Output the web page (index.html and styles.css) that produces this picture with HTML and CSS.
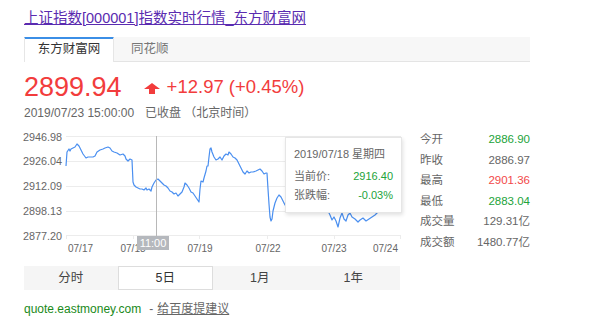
FILE: index.html
```html
<!DOCTYPE html>
<html lang="zh">
<head>
<meta charset="utf-8">
<title>上证指数</title>
<link rel="stylesheet" href="styles.css">
</head>
<body>
<div class="page">
  <a class="title" href="#">上证指数[000001]指数实时行情_东方财富网</a>
  <div class="tabs">
    <div class="tab active">东方财富网</div>
    <div class="tab">同花顺</div>
  </div>
  <div class="quote">
    <span class="price">2899.94</span>
    <svg class="arrow" width="16" height="11" viewBox="0 0 16 11"><path d="M8 0 L16 6 L11 6 L11 11 L5 11 L5 6 L0 6 Z" fill="#f23c3c"/></svg>
    <span class="change">+12.97 (+0.45%)</span>
  </div>
  <div class="time"><span>2019/07/23 15:00:00</span><span class="closed">已收盘</span><span class="zone">（北京时间）</span></div>
  <div class="main">
    <div class="chart">
      <svg width="380" height="130" viewBox="24 128 380 130">
        <g class="ylab" font-size="10.8" text-anchor="end" fill="#666">
          <text x="62" y="141.5">2946.98</text>
          <text x="62" y="166">2926.04</text>
          <text x="62" y="191">2912.09</text>
          <text x="62" y="216">2898.13</text>
          <text x="62" y="240.5">2877.20</text>
        </g>
        <g stroke="#ececec" stroke-width="1">
          <line x1="66" y1="137.5" x2="401" y2="137.5"/>
          <line x1="66" y1="162.5" x2="401" y2="162.5"/>
          <line x1="66" y1="187.5" x2="401" y2="187.5"/>
          <line x1="66" y1="212.5" x2="401" y2="212.5"/>
          <line x1="66" y1="236.5" x2="401" y2="236.5"/>
          <line x1="66.5" y1="236" x2="66.5" y2="240"/>
          <line x1="133.5" y1="236" x2="133.5" y2="240"/>
          <line x1="199.5" y1="236" x2="199.5" y2="240"/>
          <line x1="267.5" y1="236" x2="267.5" y2="240"/>
          <line x1="334.5" y1="236" x2="334.5" y2="240"/>
          <line x1="400.5" y1="236" x2="400.5" y2="240"/>
        </g>
        <g font-size="10" fill="#666">
          <text x="68" y="253">07/17</text>
          <text x="133" y="253" text-anchor="middle">07/18</text>
          <text x="200" y="253" text-anchor="middle">07/19</text>
          <text x="268" y="253" text-anchor="middle">07/22</text>
          <text x="334" y="253" text-anchor="middle">07/23</text>
          <text x="398" y="253" text-anchor="end">07/24</text>
        </g>
        <polyline fill="none" stroke="#4a8ff0" stroke-width="1.2" stroke-linejoin="round" points="66,167 67,153 69,150 70,152 71,150 73,149 75,148 77,145 79,147 81,151 83,155 86,159 88,158 90,158 93,158 95,157 97,153 100,151 103,150 105,149 108,148 110,149 112,152 114,153 117,154 120,156 123,155 125,157 126,160 128,162 130,160 132,161 133,183 134,186 136,188 138,189 140,190 142,190 144,191 146,189 147,191 149,190 151,192 152,188 154,184 156,181 158,180 160,182 162,184 164,186 166,187 168,189 170,192 172,193 174,195 176,194 178,197 180,195 182,193 184,188 185,184 187,186 189,189 191,193 193,194 195,197 197,200 199,203 200,190 201,182 203,183 204,179 206,172 207,167 208,167 209,158 210,150 211,149 212,153 214,158 216,161 218,160 220,158 222,161 224,157 226,155 228,156 229,153 231,155 233,158 235,159 237,161 239,165 241,169 243,173 245,175 247,172 249,174 251,173 253,173 256,172 258,171 260,170 262,172 264,175 266,174 267,174 268,190 269,205 270,218 271,222 272,220 273,212 275,204 277,199 279,196 281,198 283,202 285,206 288,200 292,205 296,210 300,207 305,210 310,205 315,208 320,206 325,210 328,212 330,216 332,221 334,218 336,222 338,228 340,219 342,214 344,220 346,222 348,216 350,214 352,218 355,220 358,223 360,221 363,219 366,222 369,220 372,218 375,216 378,213 381,212 383,211"/>
        <line x1="156.5" y1="137" x2="156.5" y2="237" stroke="#b8b8b8" stroke-width="1"/>
        <rect x="137" y="237" width="32" height="14" fill="#b5b8bd"/>
        <text x="153" y="248" font-size="11" fill="#fff" text-anchor="middle">11:00</text>
      </svg>
      <div class="tip">
        <div class="tip-date">2019/07/18 星期四</div>
        <div class="tip-row"><span>当前价:</span><span class="up-green">2916.40</span></div>
        <div class="tip-row"><span>张跌幅:</span><span class="up-green">-0.03%</span></div>
      </div>
    </div>
    <div class="stats">
      <div class="row"><span>今开</span><span class="green">2886.90</span></div>
      <div class="row"><span>昨收</span><span>2886.97</span></div>
      <div class="row"><span>最高</span><span class="red">2901.36</span></div>
      <div class="row"><span>最低</span><span class="green">2883.04</span></div>
      <div class="row"><span>成交量</span><span>129.31亿</span></div>
      <div class="row"><span>成交额</span><span>1480.77亿</span></div>
    </div>
  </div>
  <div class="periods">
    <div class="period">分时</div>
    <div class="period active">5日</div>
    <div class="period">1月</div>
    <div class="period">1年</div>
  </div>
  <div class="footer"><span class="site">quote.eastmoney.com</span><span class="dash">-</span><a class="advice" href="#">给百度提建议</a></div>
</div>
</body>
</html>
```
FILE: styles.css
```css
html, body {
  margin: 0;
  padding: 0;
  background: #fff;
}
body {
  font-family: "Liberation Sans", "Noto Sans CJK SC", sans-serif;
  color: #333;
}
.page {
  width: 506px;
  padding: 8px 0 0 24px;
}
.title {
  display: block;
  font-size: 14.5px;
  line-height: 20px;
  color: #5a2bb0;
  text-decoration: underline;
}
.tabs {
  margin-top: 9px;
  display: flex;
  height: 24px;
  background: #f7f7f7;
  border-bottom: 1px solid #e4e4e4;
}
.tab {
  font-size: 12.5px;
  line-height: 23px;
  color: #777;
  padding: 0 17px;
  border-top: 1px solid transparent;
}
.tab.active {
  width: 90px;
  box-sizing: border-box;
  padding: 0;
  text-align: center;
  color: #333;
  background: #fff;
  border-top: 1px solid #3b8ee6;
  border-left: 1px solid #e6e6e6;
  border-right: 1px solid #e6e6e6;
  height: 25px;
  box-shadow: inset 0 1px 0 #3b8ee6;
}
.quote {
  margin-top: 9px;
  display: flex;
  align-items: center;
  height: 32px;
  color: #f23c3c;
}
.price {
  font-size: 27px;
  line-height: 32px;
}
.arrow {
  margin-left: 22px;
  margin-top: 3px;
}
.change {
  margin-left: 7px;
  font-size: 18.5px;
  line-height: 32px;
}
.time {
  margin-top: 2px;
  font-size: 12px;
  line-height: 16px;
  color: #666;
}
.closed {
  margin-left: 11px;
}
.zone {
  margin-left: 3px;
}
.main {
  margin-top: 6px;
  display: flex;
}
.chart {
  position: relative;
  width: 380px;
  height: 130px;
}
.chart svg {
  display: block;
  overflow: visible;
  font-family: "Liberation Sans", sans-serif;
}
.tip {
  position: absolute;
  left: 261px;
  top: 10px;
  width: 117px;
  height: 76px;
  box-sizing: border-box;
  padding: 7px 8px 0 8px;
  background: #fff;
  border: 1px solid #e6e6e6;
  box-shadow: 1px 2px 4px rgba(0, 0, 0, 0.12);
  font-size: 11px;
  color: #666;
}
.tip-date {
  line-height: 18px;
}
.tip-row {
  display: flex;
  justify-content: space-between;
  line-height: 19px;
}
.tip-date + .tip-row {
  margin-top: 4px;
}
.up-green {
  color: #22a33a;
}
.stats {
  margin-left: auto;
  width: 110px;
  padding-top: 2px;
  font-size: 11.5px;
  color: #666;
}
.row {
  display: flex;
  justify-content: space-between;
  line-height: 20.6px;
}
.green {
  color: #22a33a;
}
.red {
  color: #f24848;
}
.periods {
  margin-top: 9px;
  width: 376px;
  display: flex;
  background: #f5f5f5;
}
.period {
  flex: 1;
  height: 24px;
  line-height: 24px;
  text-align: center;
  font-size: 12.5px;
  color: #444;
  box-sizing: border-box;
}
.period.active {
  background: #fff;
  border: 1px solid #ddd;
  line-height: 22px;
  color: #333;
}
.footer {
  margin-top: 10px;
  font-size: 12px;
  line-height: 18px;
}
.site {
  color: #1a8a1a;
}
.dash {
  color: #666;
  margin: 0 4px 0 8px;
}
.advice {
  color: #666;
  text-decoration: underline;
}
```
